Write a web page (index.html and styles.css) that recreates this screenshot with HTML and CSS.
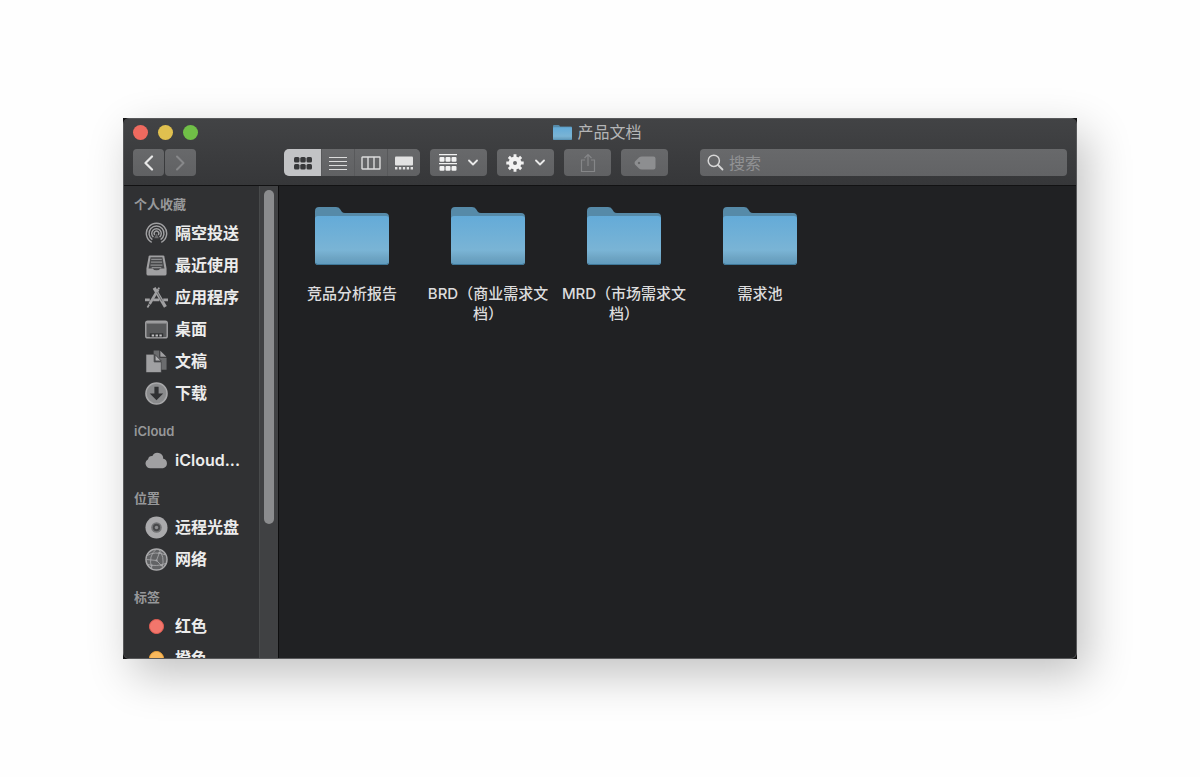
FILE: index.html
```html
<!DOCTYPE html>
<html lang="zh-CN">
<head>
    <meta charset="UTF-8">
    <meta name="viewport" content="width=device-width, initial-scale=1.0">
    <title>产品文档</title>
    <link rel="stylesheet" href="styles.css">
</head>
<body>
    <!-- Folder artwork shared by the title and the files -->
    <svg class="defs" width="0" height="0" aria-hidden="true">
        <defs>
            <linearGradient id="folder-front" x1="0" y1="0" x2="0" y2="1">
                <stop offset="0" stop-color="#64abd8"/>
                <stop offset="0.7" stop-color="#7ab4d5"/>
                <stop offset="0.85" stop-color="#6ea5c4"/>
                <stop offset="1" stop-color="#5f9abd"/>
            </linearGradient>
            <symbol id="folder" viewBox="0 0 74 58">
                <path d="M0 4Q0 0 4 0H21Q24 0 25 2L27 5Q28 6 30 6H70Q74 6 74 10V30H0Z" fill="#568aa8"/>
                <path d="M0 12Q0 9 3 9H71Q74 9 74 12V55Q74 58 71 58H3Q0 58 0 55Z" fill="url(#folder-front)"/>
                <path d="M1 56.500Q2 57.500 3 57.500H71Q72 57.500 73 56.500" fill="none" stroke="#3f7899"/>
            </symbol>
        </defs>
    </svg>

    <main class="window">
        <div class="frame">
            <header class="header">
                <div class="title-bar">
                    <div class="lights">
                        <button class="light close" aria-label="关闭"></button>
                        <button class="light minimize" aria-label="最小化"></button>
                        <button class="light maximize" aria-label="缩放"></button>
                    </div>
                    <h1 class="title">
                        <svg width="19" height="15" preserveAspectRatio="none" aria-hidden="true"><use href="#folder"/></svg>
                        产品文档
                    </h1>
                </div>

                <div class="toolbar">
                    <div class="nav">
                        <button class="tool nav-button" aria-label="后退">
                            <svg width="12" height="16" viewBox="0 0 12 16"><path d="M9 1.500L2.500 8l6.500 6.500" fill="none" stroke="#e8e8e8" stroke-width="2.200" stroke-linecap="round" stroke-linejoin="round"/></svg>
                        </button>
                        <button class="tool nav-button" aria-label="前进">
                            <svg width="12" height="16" viewBox="0 0 12 16"><path d="M2 1.500L8.500 8L2 14.500" fill="none" stroke="#87888a" stroke-width="2" stroke-linecap="round" stroke-linejoin="round"/></svg>
                        </button>
                    </div>

                    <div class="views">
                        <button class="view active" aria-label="图标" aria-pressed="true">
                            <svg width="18" height="14" viewBox="0 0 18 14" fill="#37383a">
                                <rect x="0" y="1" width="5.500" height="5.500" rx="1.500"/><rect x="6.250" y="1" width="5.500" height="5.500" rx="1.500"/><rect x="12.500" y="1" width="5.500" height="5.500" rx="1.500"/>
                                <rect x="0" y="8" width="5.500" height="5.500" rx="1.500"/><rect x="6.250" y="8" width="5.500" height="5.500" rx="1.500"/><rect x="12.500" y="8" width="5.500" height="5.500" rx="1.500"/>
                            </svg>
                        </button>
                        <button class="view" aria-label="列表" aria-pressed="false">
                            <svg width="18" height="14" viewBox="0 0 18 14"><path d="M0 1.500h18M0 5.500h18M0 9.500h18M0 13.500h18" stroke="#dcdcdc" stroke-width="1.200"/></svg>
                        </button>
                        <button class="view" aria-label="分栏" aria-pressed="false">
                            <svg width="20" height="14" viewBox="0 0 20 14"><path d="M1.500 1h17q.5 0 .5.500v11q0 .5-.5.500h-17q-.5 0-.5-.5v-11q0-.5.5-.5zM7 1v12M13 1v12" fill="none" stroke="#dcdcdc" stroke-width="1.400"/></svg>
                        </button>
                        <button class="view" aria-label="画廊" aria-pressed="false">
                            <svg width="18" height="14" viewBox="0 0 18 14" fill="#e2e2e2">
                                <rect x="0" y="0.500" width="18" height="9" rx="1"/>
                                <path d="M0 11h2.400v2.500H0zM3.900 11h2.400v2.500H3.900zM7.800 11h2.400v2.500H7.800zM11.700 11h2.400v2.500h-2.400zM15.600 11H18v2.500h-2.400z"/>
                            </svg>
                        </button>
                    </div>

                    <button class="tool menu-button" aria-label="分组">
                        <svg width="18" height="17" viewBox="0 0 18 17" fill="#f2f2f2">
                            <path d="M0 0h18v1.200H0zM0 9h18v1.200H0z"/>
                            <rect x="0.500" y="3" width="5" height="4.800" rx="1"/><rect x="6.500" y="3" width="5" height="4.800" rx="1"/><rect x="12.500" y="3" width="5" height="4.800" rx="1"/>
                            <rect x="0.500" y="12" width="5" height="4.800" rx="1"/><rect x="6.500" y="12" width="5" height="4.800" rx="1"/><rect x="12.500" y="12" width="5" height="4.800" rx="1"/>
                        </svg>
                        <svg width="10" height="7" viewBox="0 0 10 7"><path d="M1 1.500l4 4 4-4" fill="none" stroke="#e8e8e8" stroke-width="1.800" stroke-linecap="round" stroke-linejoin="round"/></svg>
                    </button>
                    <button class="tool menu-button" aria-label="操作">
                        <svg width="18" height="18" viewBox="0 0 18 18">
                            <circle cx="9" cy="9" r="4.200" fill="none" stroke="#f2f2f2" stroke-width="4.400"/>
                            <path d="M9 .3v4M9 13.700v4M.3 9h4M13.700 9h4M2.850 2.850l2.800 2.800M12.350 12.350l2.800 2.800M2.850 15.150l2.800-2.800M12.350 5.650l2.800-2.800" stroke="#f2f2f2" stroke-width="2.900"/>
                        </svg>
                        <svg width="10" height="7" viewBox="0 0 10 7"><path d="M1 1.500l4 4 4-4" fill="none" stroke="#e8e8e8" stroke-width="1.800" stroke-linecap="round" stroke-linejoin="round"/></svg>
                    </button>
                    <button class="tool wide-button" aria-label="共享">
                        <svg width="16" height="20" viewBox="0 0 16 20"><path d="M5 7H1.500v11.500h13V7H11M8 13V1.500M4.500 5L8 1.500 11.500 5" fill="none" stroke="#858688" stroke-width="1.200"/></svg>
                    </button>
                    <button class="tool wide-button" aria-label="标签">
                        <svg width="22" height="14" viewBox="0 0 22 14"><path fill-rule="evenodd" d="M1 5.500L5 1.500Q6 .5 8 .5H19.500Q21.500 .5 21.500 2.500V11.500Q21.500 13.500 19.500 13.500H8Q6 13.500 5 12.500L1 8.500Q0 7 1 5.500ZM5 5.800a1.200 1.200 0 1 0 .01 0Z" fill="#8d8e90"/></svg>
                    </button>

                    <label class="search">
                        <svg width="17" height="17" viewBox="0 0 17 17" aria-hidden="true"><circle cx="6.800" cy="6.800" r="5.600" fill="none" stroke="#d6d6d6" stroke-width="1.500"/><path d="M11 11l4.500 4.500" stroke="#d6d6d6" stroke-width="1.800" stroke-linecap="round"/></svg>
                        <input class="search-input" type="search" placeholder="搜索" aria-label="搜索">
                    </label>
                </div>
            </header>

            <div class="body">
                <nav class="sidebar">
                    <h2 class="group">个人收藏</h2>
                    <a class="place" href="#">
                        <svg class="icon" viewBox="0 0 24 24" fill="none" stroke="#a0a0a2" stroke-width="1.500">
                            <path d="M7 21.300A10.600 10.600 0 1 1 17 21.300"/>
                            <path d="M7.700 18.400A7.800 7.800 0 1 1 16.300 18.400"/>
                            <path d="M8.800 15.800A5 5 0 1 1 15.200 15.800"/>
                            <path d="M10.200 13.500A2.400 2.400 0 1 1 13.800 13.500"/>
                            <path d="M12 12l-2.500 5h5z" fill="#a0a0a2" stroke="none" opacity=".5"/>
                        </svg>
                        隔空投送
                    </a>
                    <a class="place" href="#">
                        <svg class="icon" viewBox="0 0 24 24">
                            <path d="M5 1.500H19Q20 1.500 20.200 2.500L22.500 15V20.500Q22.500 22.500 20.500 22.500H3.500Q1.500 22.500 1.500 20.500V15L3.800 2.500Q4 1.500 5 1.500Z" fill="#a0a0a2"/>
                            <path d="M5.800 3.500H18.200L20.300 15H16Q15 17 12 17T8 15H3.700Z" fill="#48494b"/>
                            <path d="M6.500 5.500h11M6.200 8.500h11.600M5.800 11.500h12.400M7 14.200h10" stroke="#8c8d8f" stroke-width="1.300"/>
                        </svg>
                        最近使用
                    </a>
                    <a class="place" href="#">
                        <svg class="icon" viewBox="0 0 24 24" fill="none" stroke="#a0a0a2">
                            <path d="M0 14.500H5M8.500 14.500H15M19 14.500H24" stroke-width="3"/>
                            <path d="M13.800 3.500L4.800 18.800" stroke-width="2.800"/>
                            <path d="M4.500 19.300L2.500 22.500" stroke-width="1.800"/>
                            <path d="M9.500 2L21.300 21.800" stroke-width="3.400"/>
                            <path d="M12.500 6.500L18 16" stroke="#666769" stroke-width="1"/>
                            <path d="M13.800 3.500l1-1.800" stroke-width="2"/>
                        </svg>
                        应用程序
                    </a>
                    <a class="place" href="#">
                        <svg class="icon" viewBox="0 0 24 24">
                            <rect x="0.800" y="3.300" width="22.400" height="17.400" rx="2" fill="#58595b" stroke="#a0a0a2" stroke-width="1.500"/>
                            <path d="M1.500 5h21" stroke="#a0a0a2" stroke-width="1.500"/>
                            <path d="M5 20v-4h14v4z" fill="#303133"/>
                            <path d="M7 18.200h2.500M11 18.200h2.500M15 18.200h2.500" stroke="#c0c0c2" stroke-width="2"/>
                        </svg>
                        桌面
                    </a>
                    <a class="place" href="#">
                        <svg class="icon" viewBox="0 0 24 24">
                            <path d="M9 .5h6v7.500h7.500v12.500H9z" fill="#6b6c6e"/>
                            <path d="M16 .8l6.300 6.300H16z" fill="#a0a0a2"/>
                            <path d="M1 4.500H9.500V12.500H17V23.500H1Z" fill="#a0a0a2" stroke="#303133" stroke-width=".6"/>
                            <path d="M10.500 4.800l6.500 6.700h-6.500z" fill="#b0b0b2" stroke="#303133" stroke-width=".8"/>
                        </svg>
                        文稿
                    </a>
                    <a class="place" href="#">
                        <svg class="icon" viewBox="0 0 24 24">
                            <circle cx="12" cy="12" r="11" fill="#8a8b8d" stroke="#a8a8aa" stroke-width="1.600"/>
                            <path d="M9.800 5h4.400v7h4.800L12 19 5 12h4.800z" fill="#303133"/>
                        </svg>
                        下载
                    </a>

                    <h2 class="group">iCloud</h2>
                    <a class="place" href="#">
                        <svg class="icon" viewBox="0 0 24 24"><path d="M5.500 20a5 5 0 0 1-2.300-9.400A4.300 4.300 0 0 1 7.700 7.200a6 6 0 0 1 11.300 3A5 5 0 0 1 18.800 20z" fill="#a0a0a2"/></svg>
                        iCloud...
                    </a>

                    <h2 class="group">位置</h2>
                    <a class="place" href="#">
                        <svg class="icon" viewBox="0 0 24 24">
                            <circle cx="12" cy="12" r="11.500" fill="#aaaaac"/>
                            <circle cx="12" cy="12" r="5.500" fill="#747577"/>
                            <circle cx="12" cy="12" r="3.800" fill="#48494b"/>
                            <circle cx="12" cy="12" r="1.800" fill="#8c8d8f"/>
                        </svg>
                        远程光盘
                    </a>
                    <a class="place" href="#">
                        <svg class="icon" viewBox="0 0 24 24" fill="none" stroke="#a8a8aa">
                            <circle cx="12" cy="12" r="11" fill="#626365" stroke-width="1.500"/>
                            <path d="M12 1Q3 8 7 21M14 1Q21 9 18 20M2 8Q10 3 21 7M2 17Q12 20 22 16M15 5L12 13 17 18M1.500 12L12 13" stroke-width=".9"/>
                            <path d="M15 5h.1M12 13h.1M7 18.200h.1M17 18h.1" stroke-width="2.200" stroke-linecap="round"/>
                        </svg>
                        网络
                    </a>

                    <h2 class="group">标签</h2>
                    <a class="place" href="#"><span class="icon"><span class="tag red"></span></span>红色</a>
                    <a class="place" href="#"><span class="icon"><span class="tag orange"></span></span>橙色</a>
                </nav>
                <div class="scrollbar"><div class="thumb"></div></div>

                <section class="files">
                    <a class="file" href="#">
                        <svg class="folder" aria-hidden="true"><use href="#folder"/></svg>
                        <span class="name">竞品分析报告</span>
                    </a>
                    <a class="file" href="#">
                        <svg class="folder" aria-hidden="true"><use href="#folder"/></svg>
                        <span class="name">BRD（商业需求文档）</span>
                    </a>
                    <a class="file" href="#">
                        <svg class="folder" aria-hidden="true"><use href="#folder"/></svg>
                        <span class="name">MRD（市场需求文档）</span>
                    </a>
                    <a class="file" href="#">
                        <svg class="folder" aria-hidden="true"><use href="#folder"/></svg>
                        <span class="name">需求池</span>
                    </a>
                </section>
            </div>
        </div>
    </main>
</body>
</html>
```

FILE: styles.css
```css
* {
    box-sizing: border-box;
}

body {
    margin: 0;
    height: 100vh;
    padding: 118px 123px;
    background-color: #fefefe;
    font-family: Inter, "Noto Sans CJK SC", sans-serif;
}

button {
    border: none;
    padding: 0;
    cursor: pointer;
}

svg {
    display: block;
    flex-shrink: 0;
}

a {
    color: inherit;
    text-decoration: none;
}

.defs {
    position: absolute;
}

.window {
    height: 100%;
    background-color: #141415;
    box-shadow: 10px 16px 42px rgba(0, 0, 0, 0.24);
}

.frame {
    display: flex;
    flex-direction: column;
    height: 100%;
    border: 1px solid #58595b;
    border-radius: 6px;
    overflow: hidden;
    background-color: #202123;
}

/* Title bar and toolbar */
.header {
    flex-shrink: 0;
    padding: 0 9px 9px;
    background: linear-gradient(#424345, #363739);
    border-bottom: 1px solid #121213;
}

.title-bar {
    display: grid;
    grid-template-columns: 1fr auto 1fr;
    align-items: center;
    height: 26px;
    margin-bottom: 4px;
    padding-right: 5px;
}

.lights {
    display: flex;
    gap: 10px;
}

.light {
    width: 15px;
    height: 15px;
    border-radius: 50%;
}

.close {
    background-color: #ee6a5f;
}

.minimize {
    background-color: #e0c04f;
}

.maximize {
    background-color: #70bf47;
}

.title {
    display: flex;
    align-items: center;
    gap: 5px;
    margin: 0;
    font-size: 16px;
    line-height: 24px;
    font-weight: 400;
    color: #b4b5b6;
}

.toolbar {
    display: flex;
    gap: 10px;
    height: 27px;
}

.nav {
    display: flex;
    gap: 1px;
    margin-right: 78px;
}

.tool,
.view {
    display: flex;
    align-items: center;
    justify-content: center;
    background: linear-gradient(#68696b, #606163);
}

.tool {
    border-radius: 4px;
}

.nav-button {
    width: 31px;
}

.views {
    display: flex;
    gap: 1px;
    border-radius: 5px;
    overflow: hidden;
    background-color: #58595b;
}

.view {
    width: 32px;
}

.view.active {
    width: 37px;
    background: #c2c3c5;
}

.menu-button {
    width: 57px;
    gap: 11px;
}

.wide-button {
    width: 47px;
}

.search {
    display: flex;
    align-items: center;
    flex: 1;
    gap: 5px;
    margin-left: 22px;
    padding: 0 7px;
    border-radius: 4px;
    background: linear-gradient(#68696b, #626365);
}

.search-input {
    flex: 1;
    min-width: 0;
    padding: 0;
    border: none;
    outline: none;
    background: none;
    font: 16px/24px Inter, "Noto Sans CJK SC", sans-serif;
    color: #e8e8e8;
}

.search-input::placeholder {
    color: #919294;
}

.body {
    display: flex;
    flex: 1;
    min-height: 0;
}

/* Sidebar */
.sidebar {
    flex-shrink: 0;
    width: 135px;
    padding-top: 6px;
    overflow: hidden;
    background-color: #303133;
}

.group {
    margin: 0;
    padding-left: 10px;
    font-size: 13px;
    line-height: 25px;
    font-weight: 600;
    color: #97989a;
}

.place + .group {
    margin-top: 10px;
}

.place {
    display: flex;
    align-items: center;
    gap: 7px;
    height: 32px;
    padding-left: 21px;
    font-size: 16px;
    line-height: 24px;
    font-weight: 600;
    color: #ececec;
    white-space: nowrap;
}

.icon {
    display: flex;
    align-items: center;
    justify-content: center;
    width: 23px;
    height: 23px;
}

.tag {
    width: 15px;
    height: 15px;
    border-radius: 50%;
}

.red {
    background-color: #f2766c;
    border: 1px solid #e85f55;
}

.orange {
    background-color: #f8b85c;
    border: 1px solid #f0a53c;
}

.scrollbar {
    flex-shrink: 0;
    width: 20px;
    padding: 4px 4px;
    background-color: #404143;
    border-left: 1px solid #484a4b;
    border-right: 1px solid #0e0e0f;
}

.thumb {
    width: 10px;
    height: 72%;
    border-radius: 5px;
    background-color: #8b8c8e;
}

/* Files */
.files {
    display: flex;
    flex: 1;
    flex-wrap: wrap;
    align-content: flex-start;
    padding: 21px 5px;
}

.file {
    display: flex;
    flex-direction: column;
    align-items: center;
    width: 136px;
}

.folder {
    width: 74px;
    height: 58px;
}

.name {
    width: 128px;
    margin-top: 19px;
    font-size: 15px;
    line-height: 20px;
    font-weight: 500;
    text-align: center;
    color: #dcdcdd;
}
```
